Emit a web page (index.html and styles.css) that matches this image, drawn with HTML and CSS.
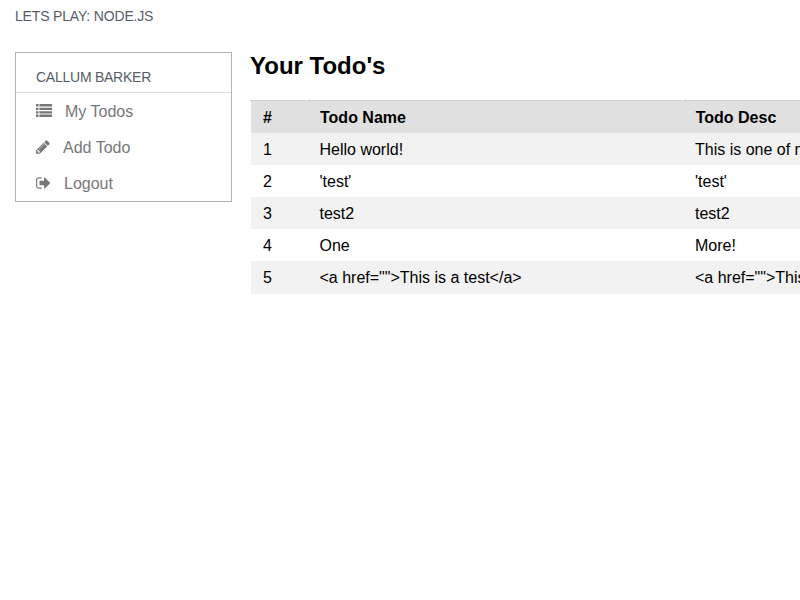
FILE: index.html
```html
<!DOCTYPE html>
<html lang="en">
<head>
<meta charset="utf-8">
<title>Lets Play: Node.js</title>
<link rel="stylesheet" href="styles.css">
</head>
<body>
<header class="brand">LETS PLAY: NODE.JS</header>
<div class="layout">
  <nav class="menu">
    <div class="menu-heading">CALLUM BARKER</div>
    <a class="menu-link"><svg class="icon" width="16" height="16" viewBox="0 0 16 16"><path d="M0 1.100h2.500v2.400H0zM3.400 1.100H16v2.400H3.400zM0 4.670h2.500v2.400H0zM3.400 4.670H16v2.400H3.400zM0 8.140h2.500v2.400H0zM3.400 8.140H16v2.400H3.400zM0 11.600h2.500v2.400H0zM3.400 11.600H16v2.400H3.400z"/></svg><span class="menu-text">My Todos</span></a>
    <a class="menu-link"><svg class="icon" width="14" height="16" viewBox="0 0 1536 1792"><path d="M363 1536l91-91-235-235-91 91v107h128v128h107zm523-928q0-22-22-22-10 0-17 7l-542 542q-7 7-7 17 0 22 22 22 10 0 17-7l542-542q7-7 7-17zm-54-192l416 416-832 832h-416v-416zm683 96q0 53-37 90l-166 166-416-416 166-165q36-38 90-38 53 0 91 38l235 234q37 39 37 91z"/></svg><span class="menu-text">Add Todo</span></a>
    <a class="menu-link"><svg class="icon" width="15" height="16" viewBox="0 0 1664 1792"><path d="M640 1440q0 4 1 20t.5 26.500-3 23.500-10 19.500-20.500 6.500h-320q-119 0-203.500-84.500t-84.500-203.500v-704q0-119 84.500-203.500t203.500-84.500h320q13 0 22.500 9.500t9.500 22.500q0 4 1 20t.5 26.500-3 23.500-10 19.500-20.500 6.500h-320q-66 0-113 47t-47 113v704q0 66 47 113t113 47h312l11.500 1 11.500 3 8 5.500 7 9 2 13.500zm928-544q0 26-19 45l-544 544q-19 19-45 19t-45-19-19-45v-288h-448q-26 0-45-19t-19-45v-384q0-26 19-45t45-19h448v-288q0-26 19-45t45-19 45 19l544 544q19 19 19 45z"/></svg><span class="menu-text">Logout</span></a>
  </nav>
  <main class="content">
    <h2 class="title">Your Todo's</h2>
    <table class="todos">
      <thead><tr><th class="col-id">#</th><th class="col-name">Todo Name</th><th>Todo Desc</th></tr></thead>
      <tbody>
        <tr><td>1</td><td>Hello world!</td><td>This is one of my todos</td></tr>
        <tr><td>2</td><td>'test'</td><td>'test'</td></tr>
        <tr><td>3</td><td>test2</td><td>test2</td></tr>
        <tr><td>4</td><td>One</td><td>More!</td></tr>
        <tr><td>5</td><td>&lt;a href=""&gt;This is a test&lt;/a&gt;</td><td>&lt;a href=""&gt;This is a test&lt;/a&gt;</td></tr>
      </tbody>
    </table>
  </main>
</div>
</body>
</html>
```
FILE: styles.css
```css
* { box-sizing: border-box; }
body {
  margin: 0;
  overflow: hidden;
  font: 16px/16px "Liberation Sans", Arial, sans-serif;
  color: #000;
  background: #fff;
}
.brand {
  height: 52px;
  padding: 8px 15px;
  font-size: 14px;
  letter-spacing: -0.17px;
  color: #565d64;
}
.layout {
  display: flex;
  padding-left: 15px;
}
.menu {
  flex: none;
  align-self: flex-start;
  width: 217px;
  height: 150px;
  border: 1px solid #b3b3b3;
  color: #777;
}
.menu-heading {
  height: 40px;
  padding: 16px 20px 0;
  border-bottom: 1px solid #dcdcdc;
  font-size: 14px;
  letter-spacing: -0.25px;
  color: #565d64;
}
.menu-link {
  display: flex;
  align-items: center;
  height: 36px;
  padding-left: 20px;
}
.icon { flex: none; fill: currentColor; }
.menu-text {
  margin-left: 13px;
  padding-top: 2px;
}
.content {
  flex: none;
  width: 1181px;
  margin-left: 18px;
}
.title {
  margin: 0;
  height: 48px;
  font-size: 24px;
  line-height: 28px;
}
.todos {
  width: 1181px;
  table-layout: fixed;
  border-collapse: separate;
  border-spacing: 0;
}
.todos th, .todos td {
  height: 32px;
  padding: 2px 12px 0 12.5px;
  text-align: left;
  white-space: nowrap;
}
.todos th {
  height: 33px;
  padding: 3px 12px 0 13px;
  background:
    linear-gradient(#cbcbcb, #cbcbcb) 0 0 / calc(100% - 1px) 1px no-repeat,
    linear-gradient(#fff, #fff) 0 0 / 100% 1px no-repeat,
    #e0e0e0;
}
.todos th:first-child {
  background:
    linear-gradient(#cbcbcb, #cbcbcb) 0 0 / calc(100% - 1px) 1px no-repeat,
    linear-gradient(#fff, #fff) 0 0 / 100% 1px no-repeat,
    linear-gradient(#fff, #fff) 0 0 / 1px 100% no-repeat,
    #e0e0e0;
}
.todos td:first-child {
  border-left: 1px solid #fff;
  padding-left: 12px;
}
.todos td:last-child { padding-left: 12px; }
.todos th:last-child { padding-left: 12.7px; }
.todos tbody tr:nth-child(odd) { background: #f2f2f2; }
.todos tbody tr:last-child td {
  height: 33px;
  padding-bottom: 1px;
}
.col-id { width: 57px; }
.col-name { width: 376px; }
```
